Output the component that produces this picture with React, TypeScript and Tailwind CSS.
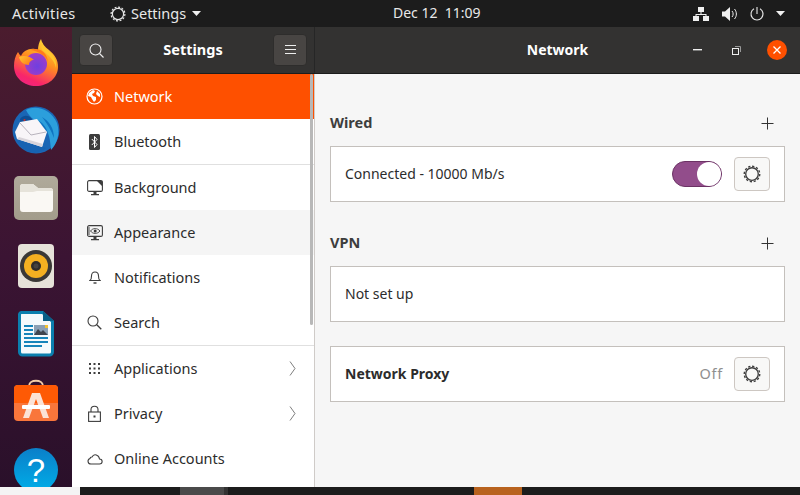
import React from 'react';

const FONT = "font-['Noto_Sans',sans-serif]";

const GearIcon: React.FC<{ size?: number; color?: string }> = ({ size = 16, color = '#3d3d3d' }) => (
  <svg width={size} height={size} viewBox="0 0 16 16" fill="none">
    <circle cx="8" cy="8" r="6.9" stroke={color} strokeWidth="1.2" strokeDasharray="2 1.600" />
    <circle cx="8" cy="8" r="5.600" stroke={color} strokeWidth="1.200" />
  </svg>
);

const Plus = () => (
  <svg width="13" height="13" viewBox="0 0 13 13" stroke="#333" strokeWidth="1">
    <path d="M6.5 0.5v12M0.5 6.5h12" />
  </svg>
);

const Chevron = () => (
  <svg width="7" height="15" viewBox="0 0 7 15" fill="none" stroke="#6f6f6f" strokeWidth="0.9">
    <path d="M1 0.5l5 7-5 7" />
  </svg>
);

const GearButton = () => (
  <div className="w-[36px] h-[34px] rounded-[4px] border border-[#cdc7c2] bg-[#f8f8f7] flex items-center justify-center">
    <GearIcon size={18} />
  </div>
);

const Firefox = () => (
  <svg width="46" height="48" viewBox="0 0 46 48">
    <defs>
      <linearGradient id="ff" x1="0.75" y1="0" x2="0.3" y2="1">
        <stop offset="0" stopColor="#ffdb3a" />
        <stop offset="0.45" stopColor="#ff8f1f" />
        <stop offset="0.85" stopColor="#f8256b" />
        <stop offset="1" stopColor="#f0247f" />
      </linearGradient>
      <radialGradient id="ffp" cx="0.55" cy="0.6" r="0.65">
        <stop offset="0" stopColor="#6f3fe0" />
        <stop offset="1" stopColor="#a63cc4" />
      </radialGradient>
      <linearGradient id="ffw" x1="0" y1="0" x2="1" y2="0.6">
        <stop offset="0" stopColor="#ffc62e" />
        <stop offset="1" stopColor="#ff7a1a" />
      </linearGradient>
    </defs>
    <path d="M28 1c1 5 4 8 8 11 6 5 9 10 9 17 0 11-10 19-22 19S1 40 1 28c0-5 1-10 4-14 1 2 2 3 3 4 2-5 8-8 14-7 1 0 2 0 3 1 0-4 1-8 3-11z" fill="url(#ff)" />
    <circle cx="23" cy="26" r="11" fill="url(#ffp)" />
    <path d="M6 19c5-2 11-1 15 3-3 0-5 2-5 5-5 0-9-3-10-8z" fill="url(#ffw)" />
    <path d="M17 12c8-3 17 1 18 12-2-6-9-11-18-12z" fill="#ff7a1a" />
    <path d="M29 4c1 4 4 7 8 10 4 4 7 9 6 16-2-9-8-13-14-18-1-3-1-5 0-8z" fill="#ffc62e" />
  </svg>
);

const Thunderbird = () => (
  <svg width="48" height="48" viewBox="0 0 48 48">
    <circle cx="24" cy="24" r="23.500" fill="#1a66b5" />
    <path d="M14 4C24-2 40 4 45 17c3 9 1 20-6 27-1-9-1-17-8-24-6-5-13-7-17-16z" fill="#2c9fdc" />
    <path d="M30 11c7 4 12 11 12 21-3-8-6-13-12-21zM26 14c5 3 8 7 10 13-3-4-6-8-10-13z" fill="#0f74c0" />
    <path d="M8 13c3-4 8-4 11-1 2 2 1 4-1 5l-9 3z" fill="#0d4f96" />
    <circle cx="12.500" cy="14" r="1.100" fill="#c9302c" />
    <path d="M2 26c9 8 26 14 32 16-3 3-7 4-11 5C12 46 4 38 2 26z" fill="#1763b2" />
    <path d="M3 26l5-10 17-3 10 13-5 15-25-8z" fill="#f8f5f8" />
    <path d="M8 17l11 12 15-3" fill="none" stroke="#b8b3bd" strokeWidth="1" />
    <path d="M5 33l25 8 1-3-24-7z" fill="#d8d4da" />
  </svg>
);

const Files = () => (
  <div className="w-[44px] h-[44px] rounded-[5px] bg-gradient-to-b from-[#b0aa9b] to-[#a29c8b] flex items-center justify-center">
    <svg width="33" height="28" viewBox="0 0 33 28">
      <path d="M0 3a3 3 0 013-3h10l5 4h12a3 3 0 013 3v18a3 3 0 01-3 3H3a3 3 0 01-3-3z" fill="#faf8f4" />
      <path d="M0 3a3 3 0 013-3h10l5 4h12a3 3 0 013 3H17l-4 1H0z" fill="#e6e3da" />
    </svg>
  </div>
);

const Rhythmbox = () => (
  <div className="w-[36px] h-[44px] rounded-[4px] bg-[#e6e2d9] flex items-center justify-center">
    <svg width="32" height="32" viewBox="0 0 32 32">
      <circle cx="16" cy="16" r="16" fill="#3a3836" />
      <circle cx="16" cy="16" r="12" fill="#f4b021" />
      <circle cx="16" cy="16" r="5" fill="#2e2c2a" />
      <circle cx="16" cy="16" r="2.500" fill="#444240" />
    </svg>
  </div>
);

const Writer = () => (
  <svg width="36" height="46" viewBox="0 0 36 46">
    <path d="M3.500 1.500h21l10 9v30.500a3 3 0 01-3 3h-27a3 3 0 01-3-3V3.500a2 2 0 012-2z" fill="#f4fafc" stroke="#0b7fae" strokeWidth="3" />
    <path d="M25 0l11 10-11 0z" fill="#0a5f86" />
    <path d="M6 14h9v2H6zM6 18h9v2H6zM6 22h9v2H6zM6 26h24v2H6zM6 30h24v2H6zM6 34h18v2H6z" fill="#1584ba" />
    <rect x="16" y="14" width="14" height="10" fill="#8aa0b4" />
    <path d="M16 24l4-6 3 3 2-2 5 5z" fill="#3f454e" />
    <rect x="27" y="14" width="3" height="3" fill="#f2c230" />
  </svg>
);

const Software = () => (
  <svg width="44" height="46" viewBox="0 0 44 46">
    <path d="M15 12V7c0-7 14-7 14 0v5" fill="none" stroke="#f2cda8" strokeWidth="2" />
    <rect x="0" y="6" width="44" height="36" rx="4" fill="#f9763b" />
    <path d="M0 10a4 4 0 014-4h36a4 4 0 014 4v14H0z" fill="#fe5a05" />
    <path d="M18 14h8l9 25h-6l-7-19-7 19H9z" fill="#fbe3d6" />
    <rect x="8" y="26" width="28" height="4" rx="1" fill="#fff" />
  </svg>
);

const Help = () => (
  <div className="w-[44px] h-[44px] shrink-0 rounded-full bg-gradient-to-b from-[#0b7fc9] to-[#00aee8] flex items-center justify-center text-white text-[33px] leading-none font-['Liberation_Sans',sans-serif]">
    ?
  </div>
);

const iconStroke = { fill: 'none', stroke: '#3d3d3d', strokeWidth: 1.1 };

const icons: Record<string, React.ReactNode> = {
  Network: (
    <svg width="17" height="17" viewBox="0 0 17 17">
      <circle cx="8.5" cy="8.5" r="7.5" fill="none" stroke="#fff" strokeWidth="1.2" />
      <path d="M3 5l4-3 2 1-1 2-2 1 1 2 3 1v3l-2 2-2-3-1-2-3-1zM11 3l3 3v3l-2-1-2-2z" fill="#fff" />
    </svg>
  ),
  Bluetooth: (
    <svg width="11" height="16" viewBox="0 0 11 16">
      <rect width="11" height="16" rx="1.5" fill="#3d3d3d" />
      <path d="M2.800 5l5.200 5.500-2.500 3V2.500L8 5.500 2.800 11" fill="none" stroke="#fff" strokeWidth="1" />
    </svg>
  ),
  Background: (
    <svg width="16" height="16" viewBox="0 0 16 16">
      <rect x="0.6" y="0.6" width="14.8" height="10.8" rx="1.5" {...iconStroke} />
      <path d="M10 1h4.5a1 1 0 011 1v4.5z" fill="#3d3d3d" />
      <path d="M6.5 12h3v2h-3zM4 14h8v1.2H4z" fill="#3d3d3d" />
    </svg>
  ),
  Appearance: (
    <svg width="16" height="16" viewBox="0 0 16 16">
      <rect x="0.6" y="0.6" width="14.8" height="10.8" rx="1.5" {...iconStroke} />
      <path d="M3.500 6c2.300-3.200 7-3.200 9.500 0-2.500 3.200-7.200 3.200-9.500 0z" {...iconStroke} strokeWidth={0.9} />
      <circle cx="8.200" cy="6" r="1.500" fill="#3d3d3d" />
      <path d="M1 3h2M1 5h2M1 7h2M1 9h2" stroke="#3d3d3d" strokeWidth="0.9" />
      <path d="M6.5 12h3v2h-3zM4 14h8v1.2H4z" fill="#3d3d3d" />
    </svg>
  ),
  Notifications: (
    <svg width="12" height="15" viewBox="0 0 12 15">
      <path d="M1 10.500c1.500-1 1.500-3 1.500-4.500 0-2.400 1.300-4 3.500-4s3.500 1.600 3.500 4c0 1.500 0 3.500 1.500 4.500z" {...iconStroke} />
      <path d="M4.500 13h3" stroke="#3d3d3d" strokeWidth="1.400" />
    </svg>
  ),
  Search: (
    <svg width="15" height="15" viewBox="0 0 15 15" {...iconStroke}>
      <circle cx="6" cy="6" r="5" />
      <path d="M9.800 9.800l4.500 4.500" strokeWidth="1.300" />
    </svg>
  ),
  Applications: (
    <svg width="11" height="11" viewBox="0 0 11 11" fill="#3d3d3d">
      {[0, 4.5, 9].flatMap((x) =>
        [0, 4.5, 9].map((y) => <rect key={`${x}-${y}`} x={x} y={y} width="2" height="2" />),
      )}
    </svg>
  ),
  Privacy: (
    <svg width="13" height="17" viewBox="0 0 13 17">
      <rect x="0.600" y="7" width="11.800" height="9.400" {...iconStroke} />
      <path d="M3 7V4.500c0-4.400 7-4.400 7 0V7" {...iconStroke} />
      <rect x="5.500" y="10.500" width="2" height="2" fill="#3d3d3d" />
    </svg>
  ),
  'Online Accounts': (
    <svg width="16" height="12" viewBox="0 0 16 12">
      <path d="M4 11h8.500c3.500 0 3.500-5 0-5C12 2 7 0 5 4 3 4 3 5 3 5.500c-3 1-2.500 5.500 1 5.500z" {...iconStroke} />
    </svg>
  ),
};

type Item = { label: string; active?: boolean; hover?: boolean; divider?: boolean; chevron?: boolean };

const items: Item[] = [
  { label: 'Network', active: true },
  { label: 'Bluetooth', divider: true },
  { label: 'Background' },
  { label: 'Appearance', hover: true },
  { label: 'Notifications' },
  { label: 'Search', divider: true },
  { label: 'Applications', chevron: true },
  { label: 'Privacy', chevron: true },
  { label: 'Online Accounts' },
];

const SidebarRow: React.FC<{ item: Item }> = ({ item }) => (
  <div
    className={`h-[45px] shrink-0 box-content flex items-center pl-[14px] pr-[18px] text-[14.5px] ${
      item.active ? 'bg-[#fe5000] text-white' : item.hover ? 'bg-[#f5f5f5] text-[#2c2c2c]' : 'bg-white text-[#2c2c2c]'
    } ${item.divider ? 'border-b border-[#e0e0e0]' : ''}`}
  >
    <span className="w-[17px] mr-[11px] flex justify-center">{icons[item.label]}</span>
    <span className="flex-1">{item.label}</span>
    {item.chevron && <Chevron />}
  </div>
);

const Card: React.FC<{ children: React.ReactNode; className?: string }> = ({ children, className = '' }) => (
  <div className={`h-[56px] bg-white border border-[#c4c0bc] flex items-center pl-[14px] pr-[14px] text-[14px] text-[#2c2c2c] ${className}`}>
    {children}
  </div>
);

const SectionHead: React.FC<{ title: string }> = ({ title }) => (
  <div className="flex items-center justify-between h-[20px] pr-[11px] mb-[13px]">
    <span className="text-[14.5px] font-bold text-[#3d3d3d]">{title}</span>
    <Plus />
  </div>
);

const HeaderButton: React.FC<{ children: React.ReactNode }> = ({ children }) => (
  <div className="w-[34px] h-[32px] rounded-[4px] bg-[#484543] border border-[#2e2d2c] flex items-center justify-center">
    {children}
  </div>
);

export default function App() {
  return (
    <div className={`w-[800px] h-[495px] overflow-hidden flex flex-col bg-[#1c1c1c] ${FONT}`}>
      {/* top bar */}
      <div className="h-[27px] shrink-0 bg-[#1c1c1c] text-[#e8e8e8] text-[14.5px] flex items-center">
        <span className="ml-[12px] w-[98px] tracking-[0.3px]">Activities</span>
        <GearIcon size={16} color="#e8e8e8" />
        <span className="ml-[5px] w-[61px]">Settings</span>
        <svg width="9" height="5" viewBox="0 0 9 5" fill="#f0f0f0"><path d="M0 0h9L4.500 5z" /></svg>
        <span className="ml-[192px] w-[92px] text-[14px] mb-[2px]">Dec 12&nbsp;&nbsp;11:09</span>
        <div className="ml-[208px] flex items-center">
          <svg width="16" height="14" viewBox="0 0 16 14" fill="#f0f0f0">
            <rect x="5" y="0" width="6" height="5" />
            <rect x="0" y="9" width="6" height="5" />
            <rect x="10" y="9" width="6" height="5" />
            <path d="M7.500 5h1v2H13.500v2h-1V8h-9v1h-1V7h5z" />
          </svg>
          <svg className="ml-[13px]" width="15" height="14" viewBox="0 0 15 14" fill="none">
            <path d="M0 4.500h3L8 0v14L3 9.500H0z" fill="#f0f0f0" />
            <path d="M10 4c1.500 1.500 1.500 4.500 0 6M12.500 2c2.500 3 2.500 7 0 10" stroke="#f0f0f0" strokeWidth="1" />
          </svg>
          <svg className="ml-[13px]" width="14" height="14" viewBox="0 0 14 14" fill="none" stroke="#e8e8e8" strokeWidth="1.100">
            <path d="M4 1.800a6 6 0 106 0M7 0v7" />
          </svg>
          <svg className="ml-[12px]" width="9" height="5" viewBox="0 0 9 5" fill="#f0f0f0"><path d="M0 0h9L4.500 5z" /></svg>
        </div>
      </div>

      <div className="h-[460px] shrink-0 flex overflow-hidden">
        {/* dock */}
        <div className="w-[72px] shrink-0 bg-gradient-to-b from-[#4b1c2e] via-[#3b1433] to-[#2a102a] flex flex-col items-center pt-[11px] overflow-hidden">
          <div className="h-[48px] shrink-0 flex items-center justify-center"><Firefox /></div>
          <div className="h-[48px] shrink-0 mt-[20px] flex items-center justify-center"><Thunderbird /></div>
          <div className="h-[48px] shrink-0 mt-[20px] flex items-center justify-center"><Files /></div>
          <div className="h-[48px] shrink-0 mt-[20px] flex items-center justify-center"><Rhythmbox /></div>
          <div className="h-[48px] shrink-0 mt-[20px] flex items-center justify-center"><Writer /></div>
          <div className="h-[48px] shrink-0 mt-[20px] flex items-center justify-center"><Software /></div>
          <div className="h-[48px] shrink-0 mt-[20px] flex items-center justify-center"><Help /></div>
        </div>

        {/* window */}
        <div className="flex-1 flex flex-col min-w-0">
          <div className="h-[47px] shrink-0 bg-[#333231] border-b border-[#1c1c1c] flex text-white text-[14.5px] font-bold">
            <div className="w-[243px] shrink-0 border-r border-[#262626] flex items-center justify-between px-[7px]">
              <HeaderButton>
                <svg width="15" height="15" viewBox="0 0 15 15" fill="none" stroke="#eee" strokeWidth="1.100">
                  <circle cx="6.500" cy="6.500" r="5.500" />
                  <path d="M10.500 10.500l4 4" />
                </svg>
              </HeaderButton>
              <span>Settings</span>
              <HeaderButton>
                <svg width="11" height="10" viewBox="0 0 11 10" stroke="#eee" strokeWidth="1">
                  <path d="M0 0.500h11M0 4.500h11M0 8.500h11" />
                </svg>
              </HeaderButton>
            </div>
            <div className="flex-1 flex items-center justify-center">
              <span className="ml-[13px] mb-[2px] text-[14px]">Network</span>
            </div>
            <div className="w-0 flex items-center justify-end pr-[13px] shrink-0">
              <div className="flex items-center shrink-0">
                <svg width="9" height="2" viewBox="0 0 9 2" fill="#eee"><rect width="9" height="1.400" /></svg>
                <svg className="ml-[30px]" width="9" height="9" viewBox="0 0 9 9" fill="none" stroke="#eee">
                  <rect x="0.500" y="2.500" width="6" height="6" />
                  <path d="M3 0.500h5.500V6" stroke="#999" />
                </svg>
                <div className="ml-[26px] w-[20px] h-[20px] rounded-full bg-[#fe5000] flex items-center justify-center shrink-0">
                  <svg width="8" height="8" viewBox="0 0 8 8" stroke="#fff" strokeWidth="1.300"><path d="M0.500 0.500l7 7M7.500 0.500l-7 7" /></svg>
                </div>
              </div>
            </div>
          </div>

          <div className="flex-1 flex min-h-0">
            {/* sidebar */}
            <div className="w-[243px] shrink-0 bg-white border-r border-[#cfcbc8] relative overflow-hidden flex flex-col">
              {items.map((item) => (
                <SidebarRow key={item.label} item={item} />
              ))}
              <div className="absolute right-[1px] top-0 w-[3px] h-[251px] bg-[#b8b8b8] rounded-[2px]" />
            </div>

            {/* content */}
            <div className="flex-1 bg-[#f6f6f6] pl-[15px] pr-[15px] pt-[39px]">
              <SectionHead title="Wired" />
              <Card>
                <span className="flex-1 mb-[2px]">Connected - 10000 Mb/s</span>
                <div className="w-[50px] h-[26px] rounded-full bg-[#924d8b] border border-[#6b3264] flex justify-end">
                  <div className="w-[24px] h-[24px] rounded-full bg-white" />
                </div>
                <div className="ml-[12px]"><GearButton /></div>
              </Card>
              <div className="mt-[31px]">
                <SectionHead title="VPN" />
              </div>
              <Card><span className="mb-[2px]">Not set up</span></Card>
              <Card className="mt-[24px]">
                <span className="flex-1 font-bold mb-[2px]">Network Proxy</span>
                <span className="text-[#8f8f8f] text-[14.5px] tracking-[0.7px]">Off</span>
                <div className="ml-[11px]"><GearButton /></div>
              </Card>
            </div>
          </div>
        </div>
      </div>

      {/* strip of the desktop below the window */}
      <div className="h-[8px] shrink-0 flex">
        <div className="w-[80px] bg-[#f4f4f4]" />
        <div className="w-[100px]" />
        <div className="w-[44px] bg-[#4a4a4a]" />
        <div className="w-[4px] bg-[#333]" />
        <div className="w-[246px]" />
        <div className="w-[48px] bg-[#b8621e]" />
      </div>
    </div>
  );
}
